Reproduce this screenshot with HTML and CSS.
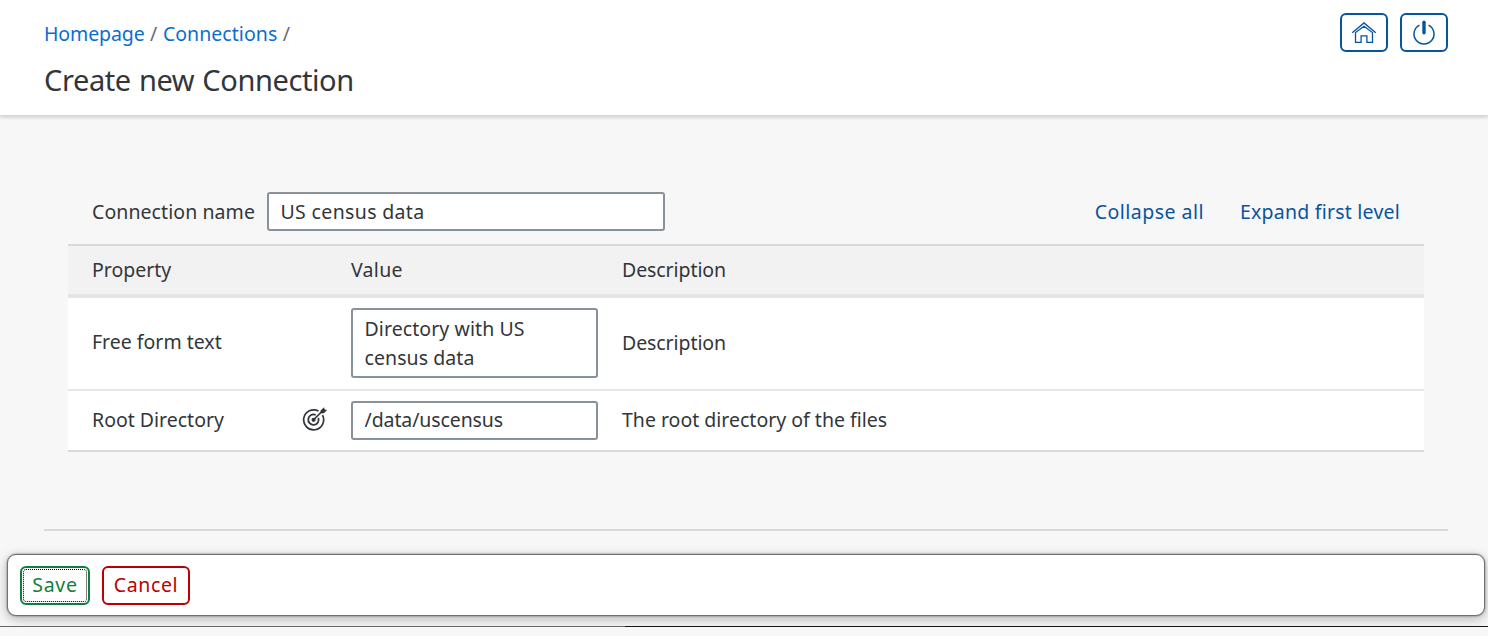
FILE: index.html
```html
<!DOCTYPE html>
<html lang="en">
<head>
<meta charset="utf-8">
<title>Create new Connection</title>
<link rel="stylesheet" href="styles.css">
</head>
<body>
<header class="header">
  <div>
    <nav class="crumbs"><a class="crumb-home">Homepage</a><span>/</span><a class="crumb-conn">Connections</a><span>/</span></nav>
    <h1 class="title">Create new Connection</h1>
  </div>
  <div class="actions">
    <button class="icon-btn" aria-label="Home">
      <svg width="26" height="24" viewBox="0 0 26 24" fill="none" stroke="currentColor"><path d="M1.200 11.800 13 1.900l11.800 9.900" stroke-width="1.400"/><path d="M4.500 11.600V21.300h5.600v-6.500h5.800v6.500h5.600V11.600L13 5.200z" stroke-width="1.300"/></svg>
    </button>
    <button class="icon-btn" aria-label="Log off">
      <svg width="26" height="26" viewBox="0 0 26 26" fill="none" stroke="currentColor"><path d="M8.500 5.100a10 10 0 1 0 9 0" stroke-width="1.500"/><path d="M13 2.200v10.500" stroke-width="3.400" stroke-linecap="round"/></svg>
    </button>
  </div>
</header>
<main class="content">
  <div class="toolbar">
    <label class="label-name" for="name">Connection name</label>
    <input class="field name-field" id="name" value="US census data">
    <a class="link collapse">Collapse all</a>
    <a class="link expand">Expand first level</a>
  </div>
  <section class="table">
    <div class="row head"><span>Property</span><span></span><span class="value">Value</span><span class="desc">Description</span></div>
    <div class="row free"><span class="free-label">Free form text</span><span></span><textarea class="field area">Directory with US
census data</textarea><span class="desc">Description</span></div>
    <div class="row root"><span>Root Directory</span>
      <svg width="26" height="26" viewBox="0.7 0.7 26 26" fill="none" stroke="currentColor"><path d="M17.200 4.800A10 10 0 1 0 21.200 8.900" stroke-width="1.700"/><path d="M14.400 8.700A5.200 5.200 0 1 0 17 11.500" stroke-width="1.800"/><circle cx="12.300" cy="13.500" r="2.100" fill="currentColor" stroke="none"/><path d="M12.300 13.500 22.500 3.300" stroke-width="1.600"/><path d="M19 6.900 19.500 3.900 22.800 1l.5 2.300 2.500.5-3.300 3.100z" fill="currentColor" stroke="none"/></svg>
      <input class="field dir" value="/data/uscensus"><span>The root directory of the files</span></div>
  </section>
  <hr class="rule">
</main>
<footer class="footer">
  <div class="bar"><button class="btn save">Save</button><button class="btn cancel">Cancel</button></div>
</footer>
<div class="edge"></div>
</body>
</html>
```

FILE: styles.css
```css
* { box-sizing: border-box; }
body { margin: 0; height: 636px; overflow: hidden; background: #f7f7f7; color: #32363a; font: 19.5px/28px "Noto Sans", sans-serif; }
button, input, textarea { font: inherit; color: inherit; letter-spacing: inherit; }
.header { position: relative; display: flex; justify-content: space-between; height: 116px; padding: 13px 40px 0 44px; background: #fff; border-bottom: 1px solid #d9d9d9; box-shadow: 0 1px 4px rgba(0,0,0,.2); }
.crumbs { display: flex; gap: 5.500px; padding-top: 7px; color: #6a6d70; }
.crumbs a { color: #0a6ed1; }
.crumb-home { letter-spacing: -.1px; }
.crumb-conn { letter-spacing: .05px; }
.title { margin: 13px 0 0; font-size: 29px; line-height: 38px; font-weight: 400; letter-spacing: -.4px; word-spacing: 1px; }
.actions { display: flex; gap: 12px; }
.icon-btn { display: flex; align-items: center; justify-content: center; width: 48px; height: 39px; padding: 0; color: #0854a0; border: 2px solid #0854a0; border-radius: 6px; background: #fff; }
.content { height: 430px; padding: 68px 64px 0 68px; }
.toolbar { display: flex; align-items: center; height: 60px; padding: 0 24px 5px; }
.field { height: 39px; padding: 0 11.500px; border: 2px solid #89919a; border-radius: 3px; background: #fff; outline: 0; }
.label-name { width: 175px; white-space: nowrap; letter-spacing: .08px; }
.name-field { width: 398px; letter-spacing: .35px; }
.link { color: #0854a0; white-space: nowrap; }
.collapse { margin-left: auto; letter-spacing: .48px; }
.expand { margin-left: 36px; letter-spacing: .22px; }
.table { border-top: 2px solid #d9d9d9; border-bottom: 2px solid #d9d9d9; }
.row { display: grid; grid-template-columns: 210px 49px 271px 1fr; align-items: center; padding-left: 24px; background: #fff; white-space: nowrap; }
.head { height: 52px; background: #f2f2f2; border-bottom: 4px solid #e5e5e5; }
.value { letter-spacing: .3px; }
.desc { letter-spacing: -.08px; }
.free { height: 93px; padding-bottom: 2px; border-bottom: 2px solid #e5e5e5; }
.free-label { padding-bottom: 2px; }
.root { height: 59px; padding-bottom: 1px; }
.dir, .area { width: 247px; }
.dir { padding-bottom: 1px; letter-spacing: -.1px; }
.area { display: block; height: 70px; padding: 4px 11.500px; line-height: 29px; resize: none; overflow: hidden; letter-spacing: .08px; }
.rule { height: 2px; margin: 77px -24px 0; border: 0; background: #d9d9d9; }
.footer { height: 80px; padding: 8px 3px 0 7px; overflow: hidden; }
.bar { display: flex; gap: 12px; height: 62px; padding: 11px 12px; background: #fff; border: 1px solid #707070; border-radius: 9px; box-shadow: 0 0 2px rgba(0,0,0,.5), 0 3px 12px rgba(0,0,0,.28); }
.btn { height: 39px; padding: 0 0 2px; border: 2px solid; border-radius: 6px; background: #fff; white-space: nowrap; }
.save { width: 70px; color: #107e3e; letter-spacing: .8px; outline: 1px dotted #000; outline-offset: -4px; }
.cancel { width: 88px; color: #bb0000; letter-spacing: .6px; }
.edge { height: 1px; background: linear-gradient(90deg, #666 625px, #161616 625px); }
```
